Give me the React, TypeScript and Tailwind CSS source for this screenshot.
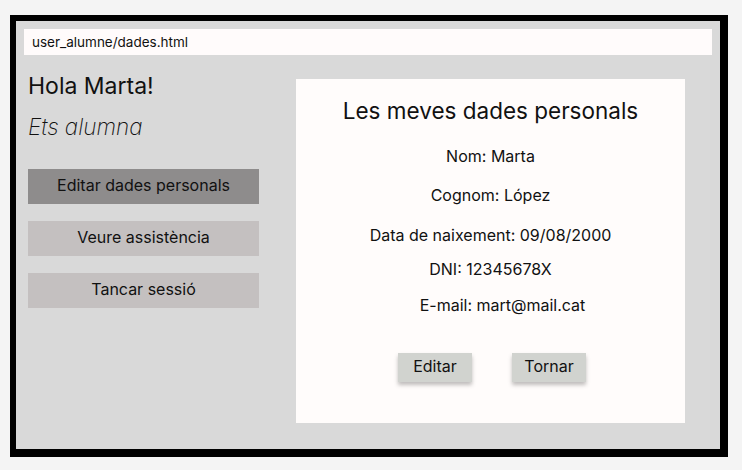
export default function App() {
  return (
    <div className="h-[470px] w-[742px] bg-[#f4f4f4] pl-[10px] pt-[15px] font-['Inter',sans-serif] text-[#111111]">
      <div className="flex h-[442px] w-[718px] flex-col border-b-[8px] border-l-[6px] border-r-[8px] border-t-[6px] border-black bg-[#d9d9d9]">
        {/* Address bar */}
        <div className="mx-[8px] mt-[8px] flex h-[26px] items-center bg-[#fffbfb] pl-[8px] text-[13.5px]">
          user_alumne/dades.html
        </div>

        <div className="flex items-start">
          {/* Left menu */}
          <div className="ml-[12px] mt-[17px] flex w-[231px] flex-col">
            <h1 className="text-[23px] leading-[28px]">Hola Marta!</h1>
            <p className="mt-[13px] text-[22.5px] font-extralight italic leading-[28px]">Ets alumna</p>
            <div className="mt-[28px] flex flex-col gap-[17px]">
              <button className="flex h-[35px] items-center justify-center bg-[#8e8c8c] pb-[3px] text-[16px]">
                Editar dades personals
              </button>
              <button className="flex h-[35px] items-center justify-center bg-[#c4c0c0] pb-[3px] text-[16px]">
                Veure assistència
              </button>
              <button className="flex h-[35px] items-center justify-center bg-[#c4c0c0] pb-[3px] text-[16px]">
                Tancar sessió
              </button>
            </div>
          </div>

          {/* Card */}
          <div className="ml-[37px] mt-[24px] flex h-[344px] w-[389px] flex-col items-center bg-[#fffcfb] pt-[16px]">
            <h2 className="text-[22.5px] leading-[32px]">Les meves dades personals</h2>
            <p className="mt-[17px] text-[16px] leading-[24px]">Nom: Marta</p>
            <p className="mt-[15px] text-[16px] leading-[24px]">Cognom: López</p>
            <p className="mt-[16px] text-[16px] leading-[24px]">Data de naixement: 09/08/2000</p>
            <p className="mt-[10px] text-[16px] leading-[24px]">DNI: 12345678X</p>
            <p className="ml-[24px] mt-[12px] text-[16px] leading-[24px]">E-mail: mart@mail.cat</p>
            <div className="mt-[36px] flex gap-[40px] pl-[3px]">
              <button className="flex h-[29px] w-[74px] items-center justify-center bg-[#d1d3cf] pb-[3px] text-[16px] shadow-[0_3px_4px_rgba(0,0,0,0.25)]">
                Editar
              </button>
              <button className="flex h-[29px] w-[74px] items-center justify-center bg-[#d1d3cf] pb-[3px] text-[16px] shadow-[0_3px_4px_rgba(0,0,0,0.25)]">
                Tornar
              </button>
            </div>
          </div>
        </div>
      </div>
    </div>
  );
}
